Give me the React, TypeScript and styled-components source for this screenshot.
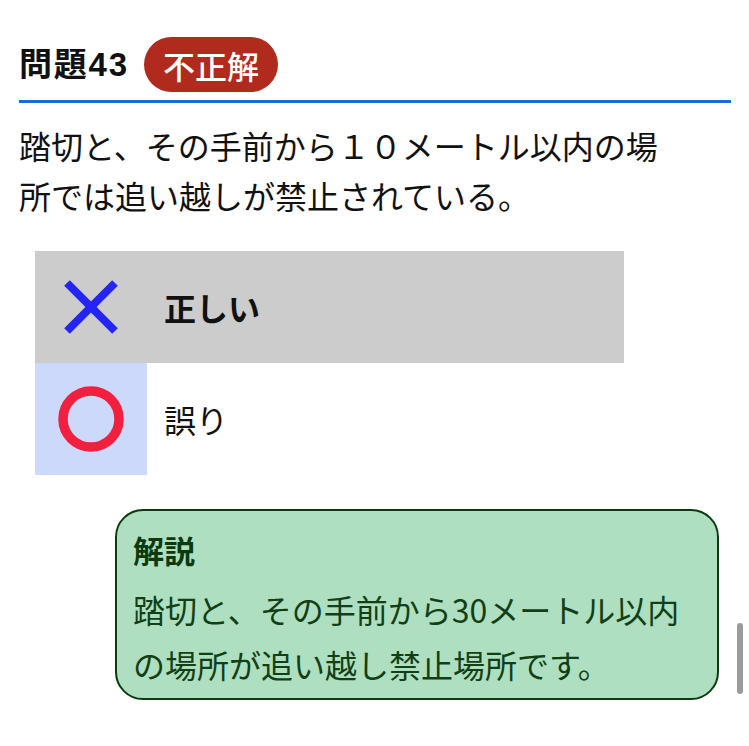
import React from "react";
import styled, { createGlobalStyle } from "styled-components";

const GlobalStyle = createGlobalStyle`
  html, body {
    margin: 0;
    padding: 0;
    background: #ffffff;
  }
  body {
    font-family: "Noto Sans CJK JP", "Noto Sans", sans-serif;
    color: #111111;
  }
`;

const Page = styled.div`
  padding: 37px 18px 40px 19px;
`;

const Header = styled.div`
  display: flex;
  align-items: center;
  gap: 15px;
  padding-bottom: 8px;
  border-bottom: 3px solid #1b6be0;
`;

const Title = styled.h2`
  margin: 0;
  font-family: "Liberation Sans", "Noto Sans CJK JP", sans-serif;
  font-size: 33px;
  font-weight: 700;
  letter-spacing: 1.8px;
  line-height: 50px;
  color: #111111;
`;

const Badge = styled.span`
  display: inline-flex;
  align-items: center;
  height: 55px;
  padding: 0 19px;
  border-radius: 28px;
  background: #b12a1e;
  color: #ffffff;
  font-size: 32px;
  font-weight: 500;
  line-height: 1;
`;

const Question = styled.p`
  margin: 17px 0 0;
  font-size: 32px;
  line-height: 50px;
  color: #111111;
  max-width: 650px;
`;

const ChoiceList = styled.div`
  display: flex;
  flex-direction: column;
  margin: 31px 0 0 16px;
  width: 589px;
`;

const ChoiceRow = styled.div<{ $selected?: boolean }>`
  display: flex;
  align-items: center;
  height: 112px;
  background: ${(p) => (p.$selected ? "#cccccc" : "transparent")};
`;

const IconCell = styled.div<{ $correct?: boolean }>`
  display: flex;
  align-items: center;
  justify-content: center;
  width: 112px;
  height: 112px;
  flex: none;
  background: ${(p) => (p.$correct ? "#cdd9fb" : "transparent")};
`;

const ChoiceLabel = styled.span<{ $bold?: boolean }>`
  padding-left: 17px;
  font-size: 32px;
  font-weight: ${(p) => (p.$bold ? 700 : 400)};
  color: #111111;
`;

const Explanation = styled.div`
  margin: 34px 12px 0 96px;
  border: 2px solid #0c3b10;
  border-radius: 28px;
  background: #aedfc0;
  padding: 17px 16px 6px;
`;

const ExplanationTitle = styled.div`
  font-size: 31px;
  font-weight: 700;
  line-height: 44px;
  color: #0b3a0e;
  margin-bottom: 10px;
`;

const ExplanationBody = styled.p`
  margin: 0;
  font-size: 32px;
  line-height: 55px;
  color: #123f16;
`;

const Scrollbar = styled.div`
  position: fixed;
  top: 623px;
  right: 6px;
  width: 6px;
  height: 71px;
  border-radius: 3px;
  background: #9b9b9b;
`;

const CrossIcon = () => (
  <svg width="60" height="58" viewBox="0 0 60 58">
    <line x1="6" y1="5" x2="54" y2="53" stroke="#2424f6" strokeWidth="8" />
    <line x1="54" y1="5" x2="6" y2="53" stroke="#2424f6" strokeWidth="8" />
  </svg>
);

const CircleIcon = () => (
  <svg width="70" height="70" viewBox="0 0 70 70">
    <circle cx="35" cy="35" r="28" fill="none" stroke="#f1203f" strokeWidth="9.5" />
  </svg>
);

export default function App() {
  return (
    <>
      <GlobalStyle />
      <Page>
        <Header>
          <Title>問題43</Title>
          <Badge>不正解</Badge>
        </Header>
        <Question>
          踏切と、その手前から１０メートル以内の場所では追い越しが禁止されている。
        </Question>
        <ChoiceList>
          <ChoiceRow $selected>
            <IconCell>
              <CrossIcon />
            </IconCell>
            <ChoiceLabel $bold>正しい</ChoiceLabel>
          </ChoiceRow>
          <ChoiceRow>
            <IconCell $correct>
              <CircleIcon />
            </IconCell>
            <ChoiceLabel>誤り</ChoiceLabel>
          </ChoiceRow>
        </ChoiceList>
        <Explanation>
          <ExplanationTitle>解説</ExplanationTitle>
          <ExplanationBody>
            踏切と、その手前から30メートル以内の場所が追い越し禁止場所です。
          </ExplanationBody>
        </Explanation>
      </Page>
      <Scrollbar />
    </>
  );
}
